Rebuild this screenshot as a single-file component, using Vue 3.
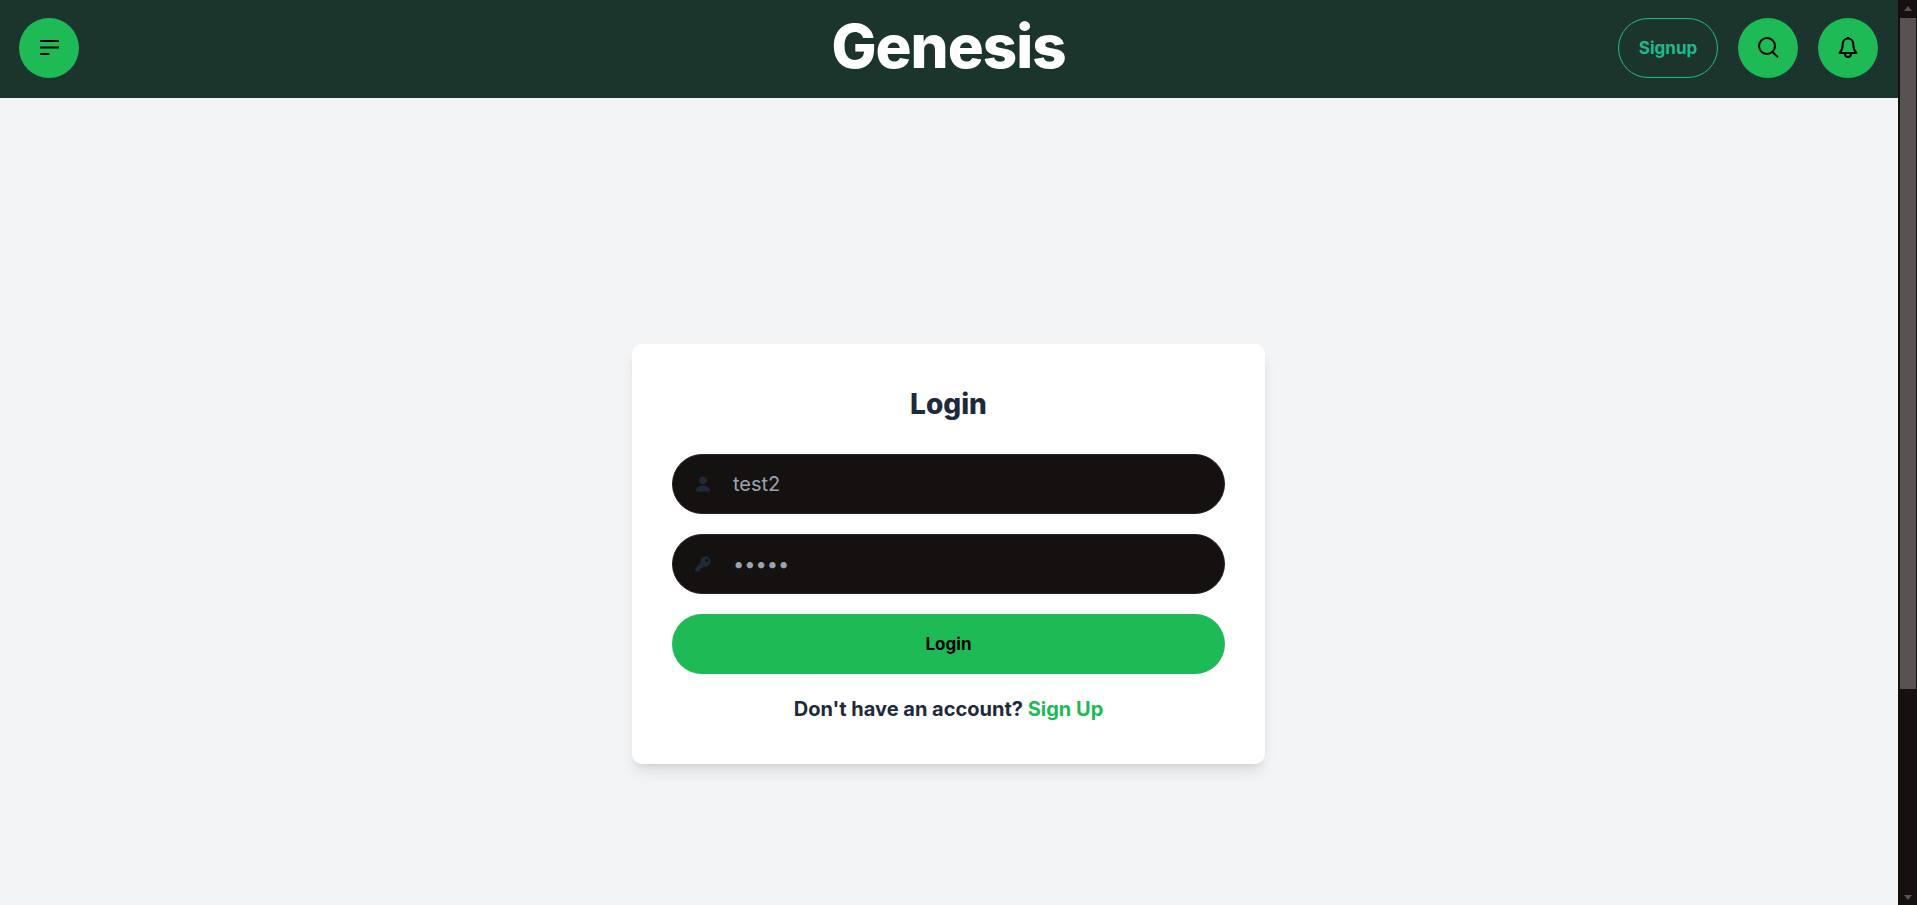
<script setup>
const username = 'test2'
const password = '12345'
</script>

<template>
  <div class="page">
    <div class="content">
      <header class="topbar">
        <button class="round-btn" aria-label="Menu">
          <svg width="24" height="24" viewBox="0 0 24 24" fill="none" stroke="#000" stroke-width="2">
            <path d="M3 5h19M3 11.500h19M3 18h9.500" />
          </svg>
        </button>
        <h1 class="logo">Genesis</h1>
        <div class="actions">
          <button class="signup-btn">Signup</button>
          <button class="round-btn" aria-label="Search">
            <svg width="24" height="24" viewBox="0 0 24 24" fill="none" stroke="#000" stroke-width="2">
              <circle cx="11" cy="10" r="8" />
              <path d="M16.500 16l5.500 5.300" />
            </svg>
          </button>
          <button class="round-btn" aria-label="Notifications">
            <svg width="24" height="24" viewBox="0 0 24 24" fill="none" stroke="#000" stroke-width="2" stroke-linejoin="round">
              <path d="M12 1v1.500" />
              <path d="M12 2.500c-3.300 0-5.300 2.600-5.300 5.900 0 4.300-1.200 6.400-3.200 8.600h17c-2-2.200-3.200-4.300-3.200-8.600 0-3.300-2-5.900-5.300-5.900z" />
              <path d="M9 17.500c0 2 1.300 3.500 3 3.500s3-1.500 3-3.500" />
            </svg>
          </button>
        </div>
      </header>

      <main class="main">
        <form class="card" @submit.prevent>
          <h2 class="title">Login</h2>
          <label class="field">
            <svg class="field-icon" width="16" height="16" viewBox="0 0 16 16" fill="#1e293b">
              <circle cx="8" cy="4.500" r="3.800" />
              <path d="M0.800 15.500c0-3.800 3-6 7.200-6s7.200 2.200 7.200 6z" />
            </svg>
            <input type="text" :value="username" />
          </label>
          <label class="field">
            <svg class="field-icon" width="16" height="16" viewBox="0 0 16 16" fill="#1e293b">
              <path d="M10.500 0.500a5 5 0 0 0-4.800 6.500L0.500 12.200V15.500h3.300l1.200-1.200v-1.800h1.800l1.600-1.600a5 5 0 1 0 2.600-10.900zm1.200 2.200a1.600 1.600 0 1 1 0 3.200 1.600 1.600 0 0 1 0-3.200z" />
            </svg>
            <input type="password" :value="password" />
          </label>
          <button class="submit" type="submit">Login</button>
          <p class="switch">Don't have an account? <a href="#" class="switch-link">Sign Up</a></p>
        </form>
      </main>
    </div>

    <div class="scrollbar">
      <span class="arrow up"></span>
      <div class="scroll-track"><div class="thumb"></div></div>
      <span class="arrow down"></span>
    </div>
  </div>
</template>

<style>
html,
body {
  margin: 0;
  overflow: hidden;
}
</style>

<style scoped>
.page {
  display: flex;
  height: 905px;
  font-family: Inter, "Liberation Sans", sans-serif;
  background: #f3f4f6;
}

.content {
  flex: 1;
  min-width: 0;
  display: flex;
  flex-direction: column;
}

.topbar {
  height: 98px;
  box-sizing: border-box;
  padding: 18px 20px 0 19px;
  display: grid;
  grid-template-columns: 1fr auto 1fr;
  align-items: start;
  background: #1b352d;
}

.round-btn {
  width: 60px;
  height: 60px;
  padding: 0;
  border: none;
  border-radius: 50%;
  display: flex;
  align-items: center;
  justify-content: center;
  background: #1eba55;
}

.logo {
  margin: 0;
  color: #fff;
  font-size: 60px;
  font-weight: 800;
  letter-spacing: -1px;
  line-height: 56px;
}

.actions {
  justify-self: end;
  display: flex;
  gap: 20px;
}

.signup-btn {
  width: 100px;
  height: 60px;
  padding: 0;
  border: 1px solid #1fb98c;
  border-radius: 30px;
  background: transparent;
  color: #1fb98c;
  font-family: inherit;
  font-size: 17px;
  font-weight: 700;
}

.main {
  flex: 1;
  display: flex;
  justify-content: center;
  align-items: flex-start;
  padding: 246px 1px 0 0;
}

.card {
  width: 633px;
  height: 420px;
  box-sizing: border-box;
  padding: 40px;
  border-radius: 10px;
  background: #fff;
  box-shadow: 0 10px 15px -3px rgba(0, 0, 0, 0.1), 0 4px 6px -4px rgba(0, 0, 0, 0.1);
  display: flex;
  flex-direction: column;
  gap: 20px;
}

.title {
  margin: 0 0 10px;
  height: 40px;
  text-align: center;
  color: #1e293b;
  font-size: 28px;
  font-weight: 800;
  line-height: 40px;
}

.field {
  height: 60px;
  flex: none;
  display: flex;
  align-items: center;
  gap: 22px;
  padding: 0 22px;
  box-sizing: border-box;
  border: 1px solid #262626;
  border-radius: 30px;
  background: #151111;
}

.field-icon {
  flex: none;
}

.field input {
  flex: 1;
  min-width: 0;
  padding: 0;
  border: none;
  outline: none;
  background: transparent;
  color: #9ca3af;
  font-family: inherit;
  font-size: 20px;
}

.submit {
  height: 60px;
  flex: none;
  border: none;
  border-radius: 30px;
  background: #1eba55;
  color: #000;
  font-family: inherit;
  font-size: 17px;
  font-weight: 700;
}

.switch {
  margin: 3px 0 0;
  text-align: center;
  color: #1e293b;
  font-size: 20px;
  font-weight: 700;
}

.switch-link {
  color: #1eba55;
  text-decoration: none;
}

.scrollbar {
  width: 19px;
  flex: none;
  display: flex;
  flex-direction: column;
  align-items: center;
  background: #151111;
}

.scroll-track {
  flex: 1;
  width: 100%;
}

.thumb {
  width: 16px;
  height: 671px;
  margin-left: 2px;
  background: #575352;
}

.arrow {
  flex: none;
  height: 18px;
  width: 100%;
  position: relative;
}

.arrow::after {
  content: "";
  position: absolute;
  left: 6px;
  border-left: 4px solid transparent;
  border-right: 4px solid transparent;
}

.arrow.up::after {
  top: 6px;
  border-bottom: 5px solid #575352;
}

.arrow.down::after {
  bottom: 5px;
  border-top: 5px solid #575352;
}
</style>
